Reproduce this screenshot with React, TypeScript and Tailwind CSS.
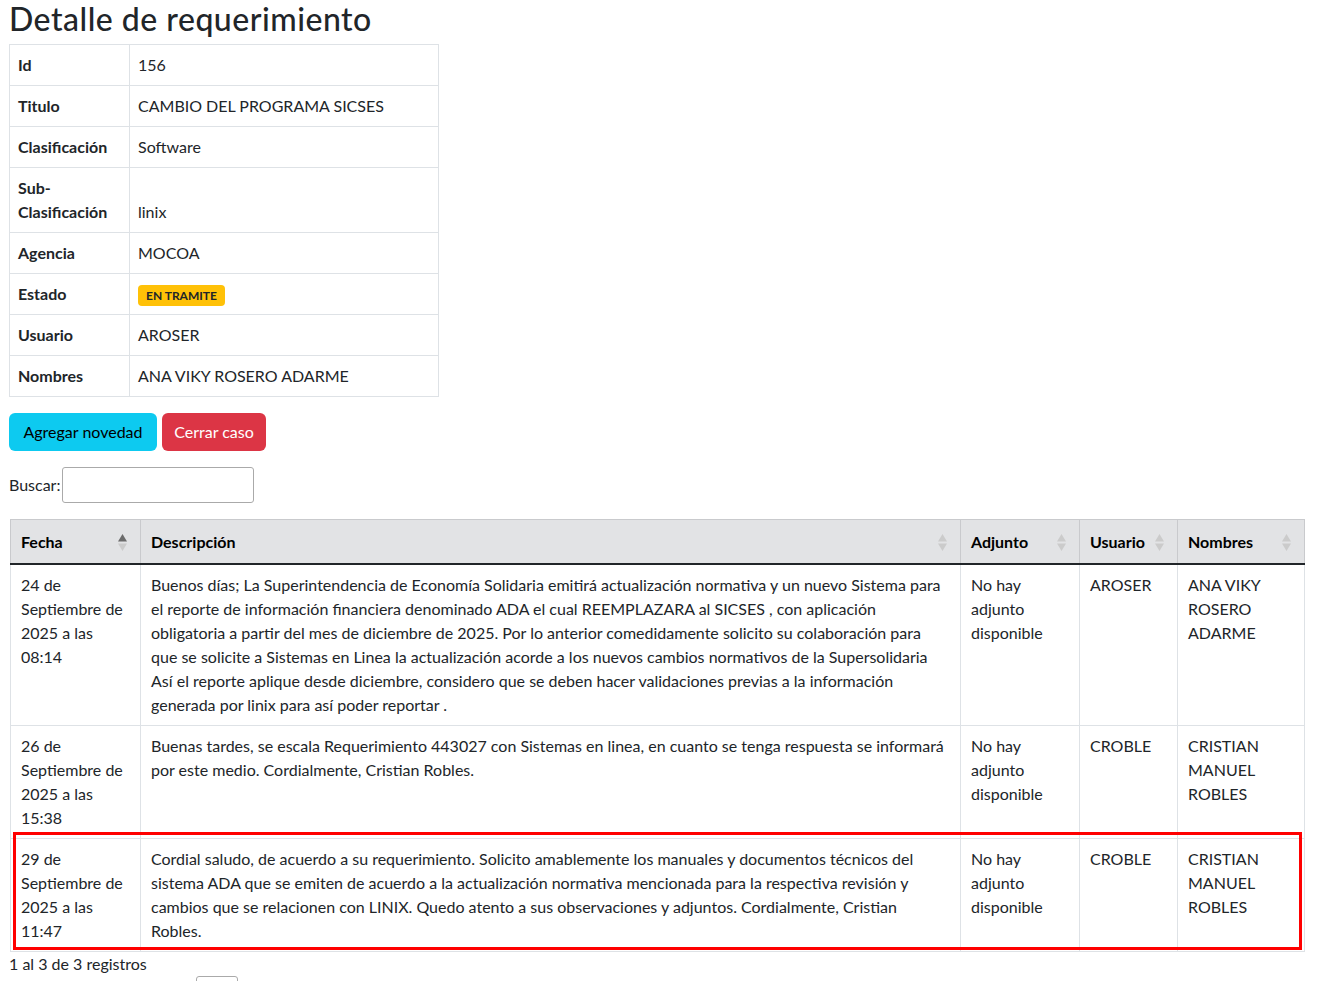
import React from "react";

type Novedad = {
  fecha: string;
  descripcion: string;
  adjunto: string;
  usuario: string;
  nombres: string;
};

const detalle: { label: React.ReactNode; value: React.ReactNode }[] = [
  { label: "Id", value: "156" },
  { label: "Titulo", value: "CAMBIO DEL PROGRAMA SICSES" },
  { label: "Clasificación", value: "Software" },
  { label: "Sub-Clasificación", value: "linix" },
  { label: "Agencia", value: "MOCOA" },
  {
    label: "Estado",
    value: (
      <span className="inline-block rounded-[4px] bg-[#ffc107] px-[8px] py-[4px] text-[12px] font-bold leading-[13px] text-[#212529] align-middle">
        EN TRAMITE
      </span>
    ),
  },
  { label: "Usuario", value: "AROSER" },
  { label: "Nombres", value: "ANA VIKY ROSERO ADARME" },
];

const novedades: Novedad[] = [
  {
    fecha: "24 de Septiembre de 2025 a las 08:14",
    descripcion:
      "Buenos días; La Superintendencia de Economía Solidaria emitirá actualización normativa y un nuevo Sistema para el reporte de información financiera denominado ADA el cual REEMPLAZARA al SICSES , con aplicación obligatoria a partir del mes de diciembre de 2025. Por lo anterior comedidamente solicito su colaboración para que se solicite a Sistemas en Linea la actualización acorde a los nuevos cambios normativos de la Supersolidaria Así el reporte aplique desde diciembre, considero que se deben hacer validaciones previas a la información generada por linix para así poder reportar .",
    adjunto: "No hay adjunto disponible",
    usuario: "AROSER",
    nombres: "ANA VIKY ROSERO ADARME",
  },
  {
    fecha: "26 de Septiembre de 2025 a las 15:38",
    descripcion:
      "Buenas tardes, se escala Requerimiento 443027 con Sistemas en linea, en cuanto se tenga respuesta se informará por este medio. Cordialmente, Cristian Robles.",
    adjunto: "No hay adjunto disponible",
    usuario: "CROBLE",
    nombres: "CRISTIAN MANUEL ROBLES",
  },
  {
    fecha: "29 de Septiembre de 2025 a las 11:47",
    descripcion:
      "Cordial saludo, de acuerdo a su requerimiento. Solicito amablemente los manuales y documentos técnicos del sistema ADA que se emiten de acuerdo a la actualización normativa mencionada para la respectiva revisión y cambios que se relacionen con LINIX. Quedo atento a sus observaciones y adjuntos. Cordialmente, Cristian Robles.",
    adjunto: "No hay adjunto disponible",
    usuario: "CROBLE",
    nombres: "CRISTIAN MANUEL ROBLES",
  },
];

function SortIcon({ active }: { active?: boolean }) {
  return (
    <svg width="9" height="17" viewBox="0 0 9 17" className="shrink-0">
      <polygon points="4.5,0 9,7.5 0,7.5" fill={active ? "#6b6b6b" : "#cbcbcb"} />
      <polygon points="0,9.5 9,9.5 4.5,17" fill="#cbcbcb" />
    </svg>
  );
}

function Th({ children, active }: { children: React.ReactNode; active?: boolean }) {
  return (
    <th className="border-x border-[#c9cacd] pl-[10px] pr-[13px] pt-[10px] pb-[9px] text-left font-bold text-black">
      <div className="flex items-center justify-between">
        <span>{children}</span>
        <SortIcon active={active} />
      </div>
    </th>
  );
}

export default function App() {
  return (
    <div className="min-h-screen bg-white px-[9px] font-['Lato',sans-serif] text-[16px] leading-[24px] text-[#212529]">
      <h2 className="pt-[1px] pb-[7px] text-[32px] font-medium leading-[36px] tracking-[0.5px]">
        Detalle de requerimiento
      </h2>

      <table className="w-[430px] table-fixed border-collapse border border-[#dee2e6]">
        <colgroup>
          <col className="w-[120px]" />
          <col />
        </colgroup>
        <tbody>
          {detalle.map((d, i) => (
            <tr key={i} className="border-b border-[#dee2e6]">
              <td className="border-r border-[#dee2e6] p-2 align-middle font-bold">
                {d.label}
              </td>
              <td className="p-2 align-bottom">{d.value}</td>
            </tr>
          ))}
        </tbody>
      </table>

      <div className="mt-4 flex gap-[5px]">
        <button className="h-[38px] w-[148px] rounded-[6px] bg-[#0dcaf0] text-black">
          Agregar novedad
        </button>
        <button className="h-[38px] w-[104px] rounded-[6px] bg-[#dc3545] text-white">
          Cerrar caso
        </button>
      </div>

      <div className="mt-4 flex items-center">
        <label>Buscar:</label>
        <input className="ml-[2px] h-[36px] w-[192px] rounded-[3px] border border-[#aaa] px-1" />
      </div>

      <div className="relative mt-4 ml-px w-[1294px]">
        <table className="w-[1294px] table-fixed border-collapse border-x border-[#dee2e6]">
          <colgroup>
            <col className="w-[130px]" />
            <col className="w-[820px]" />
            <col className="w-[119px]" />
            <col className="w-[98px]" />
            <col className="w-[127px]" />
          </colgroup>
          <thead>
            <tr className="border-t border-b-2 border-t-[#c9cacd] border-b-[#212529] bg-[#e2e3e5]">
              <Th active>Fecha</Th>
              <Th>Descripción</Th>
              <Th>Adjunto</Th>
              <Th>Usuario</Th>
              <Th>Nombres</Th>
            </tr>
          </thead>
          <tbody>
            {novedades.map((n, i) => (
              <tr key={i} className="border-b border-[#dee2e6] align-top">
                <td className="border-r border-[#dee2e6] px-[10px] py-2">{n.fecha}</td>
                <td className="border-r border-[#dee2e6] px-[10px] py-2">{n.descripcion}</td>
                <td className="border-r border-[#dee2e6] px-[10px] py-2">{n.adjunto}</td>
                <td className="border-r border-[#dee2e6] px-[10px] py-2">{n.usuario}</td>
                <td className="px-[10px] py-2">{n.nombres}</td>
              </tr>
            ))}
          </tbody>
        </table>
        <div className="pointer-events-none absolute left-[3px] top-[313px] h-[118px] w-[1289px] border-[3px] border-[#ff0000]" />
      </div>

      <div>1 al 3 de 3 registros</div>
      <div className="flex">
        <span
          aria-label="Página 1"
          className="ml-[187px] h-[34px] w-[42px] rounded-[3px] border border-[#aaa]"
        />
      </div>
    </div>
  );
}
